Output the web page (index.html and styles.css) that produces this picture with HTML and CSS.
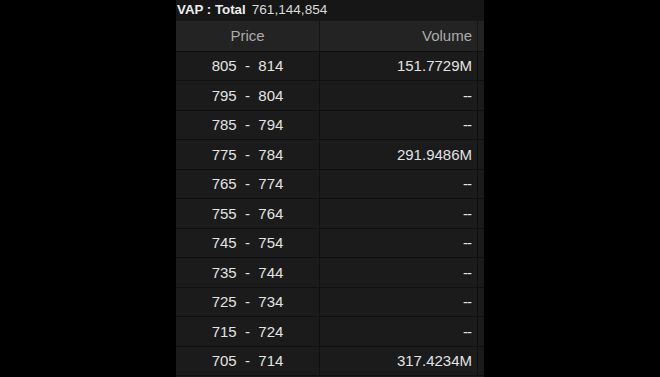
FILE: index.html
```html
<!DOCTYPE html>
<html>
<head>
<meta charset="utf-8">
<link rel="stylesheet" href="styles.css">
</head>
<body>
<div class="panel">
  <div class="title"><span class="label">VAP : Total</span><span class="total">761,144,854</span></div>
  <div class="table">
    <div class="row head"><div class="cell price">Price</div><div class="cell vol">Volume</div><div class="cell gutter"></div></div>
    <div class="row"><div class="cell price">805  -  814</div><div class="cell vol">151.7729M</div><div class="cell gutter"></div></div>
    <div class="row"><div class="cell price">795  -  804</div><div class="cell vol dash">--</div><div class="cell gutter"></div></div>
    <div class="row"><div class="cell price">785  -  794</div><div class="cell vol dash">--</div><div class="cell gutter"></div></div>
    <div class="row"><div class="cell price">775  -  784</div><div class="cell vol">291.9486M</div><div class="cell gutter"></div></div>
    <div class="row"><div class="cell price">765  -  774</div><div class="cell vol dash">--</div><div class="cell gutter"></div></div>
    <div class="row"><div class="cell price">755  -  764</div><div class="cell vol dash">--</div><div class="cell gutter"></div></div>
    <div class="row"><div class="cell price">745  -  754</div><div class="cell vol dash">--</div><div class="cell gutter"></div></div>
    <div class="row"><div class="cell price">735  -  744</div><div class="cell vol dash">--</div><div class="cell gutter"></div></div>
    <div class="row"><div class="cell price">725  -  734</div><div class="cell vol dash">--</div><div class="cell gutter"></div></div>
    <div class="row"><div class="cell price">715  -  724</div><div class="cell vol dash">--</div><div class="cell gutter"></div></div>
    <div class="row"><div class="cell price">705  -  714</div><div class="cell vol">317.4234M</div><div class="cell gutter"></div></div>
  </div>
</div>
</body>
</html>
```
FILE: styles.css
```css
html, body {
  margin: 0;
  padding: 0;
  background: #000;
  height: 100%;
  overflow: hidden;
}
body {
  font-family: "Liberation Sans", Arial, sans-serif;
}
.panel {
  margin-left: 176px;
  width: 308px;
  height: 377px;
  background: #1a1a1a;
  overflow: hidden;
}
.title {
  height: 21px;
  line-height: 19px;
  font-size: 13px;
  background: #161616;
  padding-left: 1px;
  white-space: nowrap;
}
.label {
  font-weight: bold;
  color: #ececec;
  font-size: 13.3px;
}
.total {
  color: #dadada;
  margin-left: 6px;
  font-size: 13.6px;
}
.table {
  display: flex;
  flex-direction: column;
}
.row {
  display: grid;
  grid-template-columns: 144px 158px 6px;
  height: 29.5px;
  box-sizing: border-box;
  border-bottom: 1px solid #101010;
  font-size: 15px;
  color: #e2e2e2;
  background: #1b1b1b;
}
.row.head {
  height: 30.5px;
  background: #232323;
  color: #ababab;
}
.cell {
  display: flex;
  align-items: center;
  white-space: pre;
  box-sizing: border-box;
}
.price {
  justify-content: center;
  border-right: 1px solid #101010;
}
.vol {
  justify-content: flex-end;
  padding-right: 5px;
  border-right: 1px solid #101010;
}
.dash {
  letter-spacing: -1px;
  padding-right: 6px;
}
.head .price, .head .vol {
  border-right-color: #151515;
}
.gutter {
  background: transparent;
}
```
